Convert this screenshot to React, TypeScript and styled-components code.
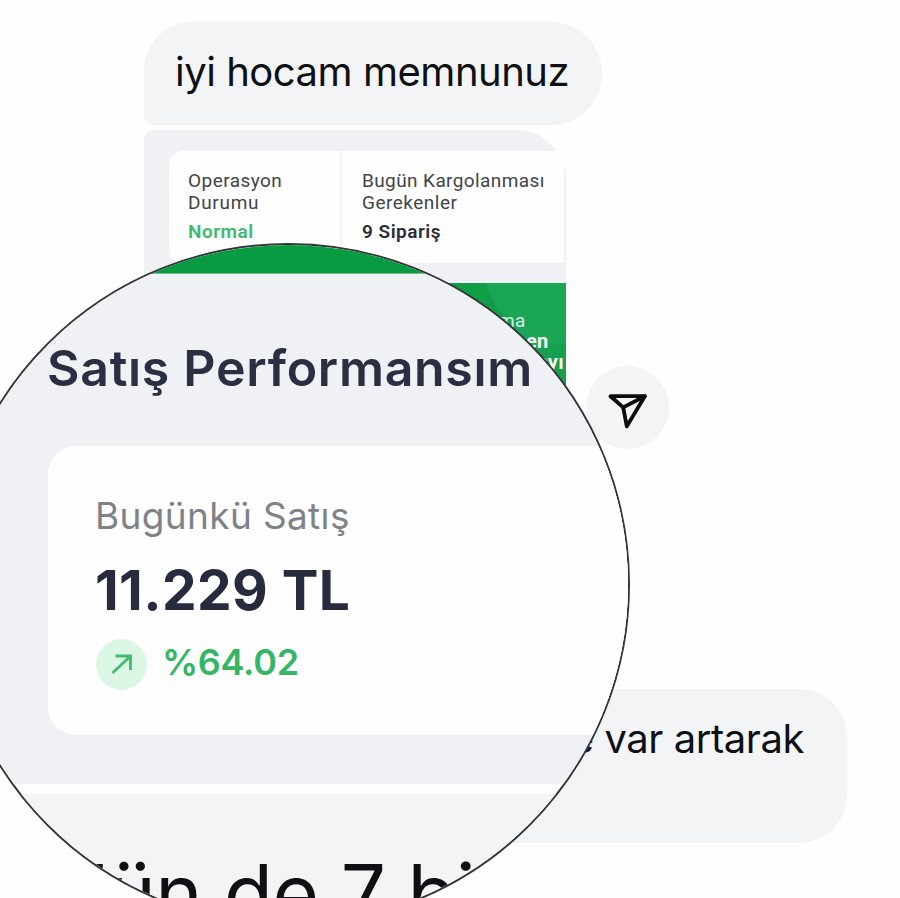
import React from "react";
import styled, { createGlobalStyle } from "styled-components";

const GlobalStyle = createGlobalStyle`
  * { box-sizing: border-box; }
  html, body { margin: 0; padding: 0; background: #fefefe; }
`;

const Page = styled.main`
  position: relative;
  width: 900px;
  height: 898px;
  overflow: hidden;
  background: #fefefe;
  font-family: Inter, "Liberation Sans", sans-serif;
`;

const Thread = styled.section`
  display: flex;
  flex-direction: column;
  align-items: flex-start;
  gap: 5px;
  padding: 22px 0 0 144px;
`;

const Bubble = styled.div<{ $width: number; $height: number; $radius: string; $end?: boolean }>`
  display: flex;
  justify-content: ${(p) => (p.$end ? "flex-end" : "flex-start")};
  width: ${(p) => p.$width}px;
  height: ${(p) => p.$height}px;
  padding: 26px 43px 0 31px;
  border-radius: ${(p) => p.$radius};
  background: #f3f4f6;
`;

const Message = styled.p<{ $spacing: number }>`
  margin: 0;
  font-size: 40px;
  line-height: 48px;
  letter-spacing: ${(p) => p.$spacing}px;
  white-space: nowrap;
  color: #0e1013;
`;

const MediaRow = styled.div`
  display: flex;
  align-items: center;
  gap: 20px;
`;

const Media = styled.div`
  display: flex;
  flex-direction: column;
  width: 422px;
  height: 554px;
  padding: 21px 0 0 25px;
  gap: 20px;
  overflow: hidden;
  border-radius: 10px 50px 10px 10px;
  background: #f0f1f5;
  font-family: Roboto, "Liberation Sans", sans-serif;
`;

const StatusCard = styled.div`
  display: flex;
  width: 395px;
  height: 112px;
  flex: none;
  border-radius: 14px 0 0 14px;
  background: #fefefe;
`;

const StatusCell = styled.div<{ $width: number }>`
  width: ${(p) => p.$width}px;
  padding: 19px 0 0 19px;
  & + & {
    padding-left: 20px;
    border-left: 2px solid #f3f3f6;
  }
`;

const StatusLabel = styled.div<{ $spacing: number }>`
  font-size: 19px;
  line-height: 22px;
  letter-spacing: ${(p) => p.$spacing}px;
  white-space: nowrap;
  color: #42444b;
`;

const StatusValue = styled.div<{ $color: string; $spacing: number }>`
  margin-top: 7px;
  font-size: 19px;
  font-weight: 600;
  line-height: 22px;
  letter-spacing: ${(p) => p.$spacing}px;
  white-space: nowrap;
  color: ${(p) => p.$color};
`;

const Banner = styled.div`
  flex: 1;
  padding: 27px 0 0 297px;
  background:
    radial-gradient(circle at 395px 133px, #159f4e 0 72px, transparent 73px),
    radial-gradient(circle at 388px -17px, #1ba557 0 72px, transparent 73px),
    linear-gradient(90deg, #109d48 0 322px, #1ba557 350px);
`;

const BannerText = styled.div<{ $bold?: boolean; $indent: number }>`
  padding-left: ${(p) => p.$indent}px;
  font-size: ${(p) => (p.$bold ? 20 : 19)}px;
  line-height: 21px;
  font-weight: ${(p) => (p.$bold ? 700 : 400)};
  letter-spacing: 0.3px;
  white-space: nowrap;
  color: ${(p) => (p.$bold ? "#f4fbf7" : "#d5f0e0")};
`;

const SendButton = styled.button`
  display: flex;
  width: 83px;
  height: 83px;
  padding: 0;
  border: 0;
  border-radius: 50%;
  background: #f3f4f6;
`;

const Lens = styled.section`
  position: absolute;
  left: -53px;
  top: 243px;
  width: 683px;
  height: 683px;
  overflow: hidden;
  border: 2px solid #35363a;
  border-radius: 50%;
  background: #fefefe;
`;

const LensStrip = styled.div`
  height: 29px;
  border-bottom: 1px solid #7cb893;
  background: #089b42;
`;

const LensPanel = styled.div`
  height: 510px;
  padding: 66px 0 0 98px;
  background: #f0f1f5;
`;

const LensHeading = styled.h2`
  margin: 0;
  font-size: 50px;
  font-weight: 600;
  line-height: 56px;
  letter-spacing: 0.72px;
  white-space: nowrap;
  color: #2b2f42;
`;

const SalesCard = styled.div`
  height: 289px;
  margin: 50px 0 0 1px;
  padding: 48px 0 0 47px;
  border-radius: 28px 0 0 28px;
  background: #fefefe;
`;

const SalesLabel = styled.div`
  font-size: 37px;
  line-height: 44px;
  letter-spacing: 0.35px;
  color: #808287;
`;

const SalesValue = styled.div`
  margin-top: 20px;
  font-size: 55px;
  font-weight: 700;
  line-height: 64px;
  letter-spacing: 0.4px;
  color: #272b3d;
`;

const Trend = styled.div`
  display: flex;
  align-items: center;
  gap: 15px;
  height: 51px;
  margin: 17px 0 0 1px;
`;

const TrendBadge = styled.span`
  display: flex;
  width: 51px;
  height: 51px;
  border-radius: 50%;
  background: #dcf6e6;
`;

const TrendValue = styled.span`
  margin-top: -5px;
  font-size: 36px;
  font-weight: 600;
  line-height: 40px;
  letter-spacing: -0.3px;
  color: #35b566;
`;

const LensBubble = styled.div`
  height: 200px;
  margin-top: 10px;
  padding: 51px 0 0 111px;
  background: #f3f4f6;
`;

const LensMessage = styled.p`
  margin: 0;
  font-size: 80px;
  line-height: 96px;
  letter-spacing: -0.5px;
  white-space: nowrap;
  color: #0e1013;
`;

const SendIcon = () => (
  <svg width="83" height="83" viewBox="0 0 83 83" fill="none" stroke="#0b0c0e" strokeWidth="3.8" strokeLinejoin="round" strokeLinecap="round">
    <path d="M24.5 30.2H58.8L40.8 60.4L37.2 41.4Z" />
    <path d="M37.2 41.4L58.8 30.2" />
  </svg>
);

const TrendIcon = () => (
  <svg width="51" height="51" viewBox="0 0 51 51" fill="none" stroke="#3fbb70" strokeWidth="2.8">
    <path d="M16.5 34L34.5 17" />
    <path d="M19.5 17H34.5V31" />
  </svg>
);

export default function App() {
  return (
    <>
      <GlobalStyle />
      <Page>
        <Thread>
          <Bubble $width={458} $height={103} $radius="48px 51px 51px 10px">
            <Message $spacing={-0.48}>iyi hocam memnunuz</Message>
          </Bubble>
          <MediaRow>
            <Media>
              <StatusCard>
                <StatusCell $width={171}>
                  <StatusLabel $spacing={0.45}>Operasyon</StatusLabel>
                  <StatusLabel $spacing={0.7}>Durumu</StatusLabel>
                  <StatusValue $color="#3dba6d" $spacing={0.5}>Normal</StatusValue>
                </StatusCell>
                <StatusCell $width={224}>
                  <StatusLabel $spacing={0.4}>Bugün Kargolanması</StatusLabel>
                  <StatusLabel $spacing={0.5}>Gerekenler</StatusLabel>
                  <StatusValue $color="#2a2c39" $spacing={0.5}>9 Sipariş</StatusValue>
                </StatusCell>
              </StatusCard>
              <Banner>
                <BannerText $indent={32}>ma</BannerText>
                <BannerText $bold $indent={60}>en</BannerText>
                <BannerText $bold $indent={71}>ayı</BannerText>
              </Banner>
            </Media>
            <SendButton aria-label="Gönder">
              <SendIcon />
            </SendButton>
          </MediaRow>
          <Bubble $width={703} $height={154} $radius="10px 48px 48px 48px" $end>
            <Message $spacing={-0.45}>de var artarak</Message>
          </Bubble>
        </Thread>
        <Lens>
          <LensStrip />
          <LensPanel>
            <LensHeading>Satış Performansım</LensHeading>
            <SalesCard>
              <SalesLabel>Bugünkü Satış</SalesLabel>
              <SalesValue>11.229 TL</SalesValue>
              <Trend>
                <TrendBadge>
                  <TrendIcon />
                </TrendBadge>
                <TrendValue>%64.02</TrendValue>
              </Trend>
            </SalesCard>
          </LensPanel>
          <LensBubble>
            <LensMessage>dün de 7 bi</LensMessage>
          </LensBubble>
        </Lens>
      </Page>
    </>
  );
}
